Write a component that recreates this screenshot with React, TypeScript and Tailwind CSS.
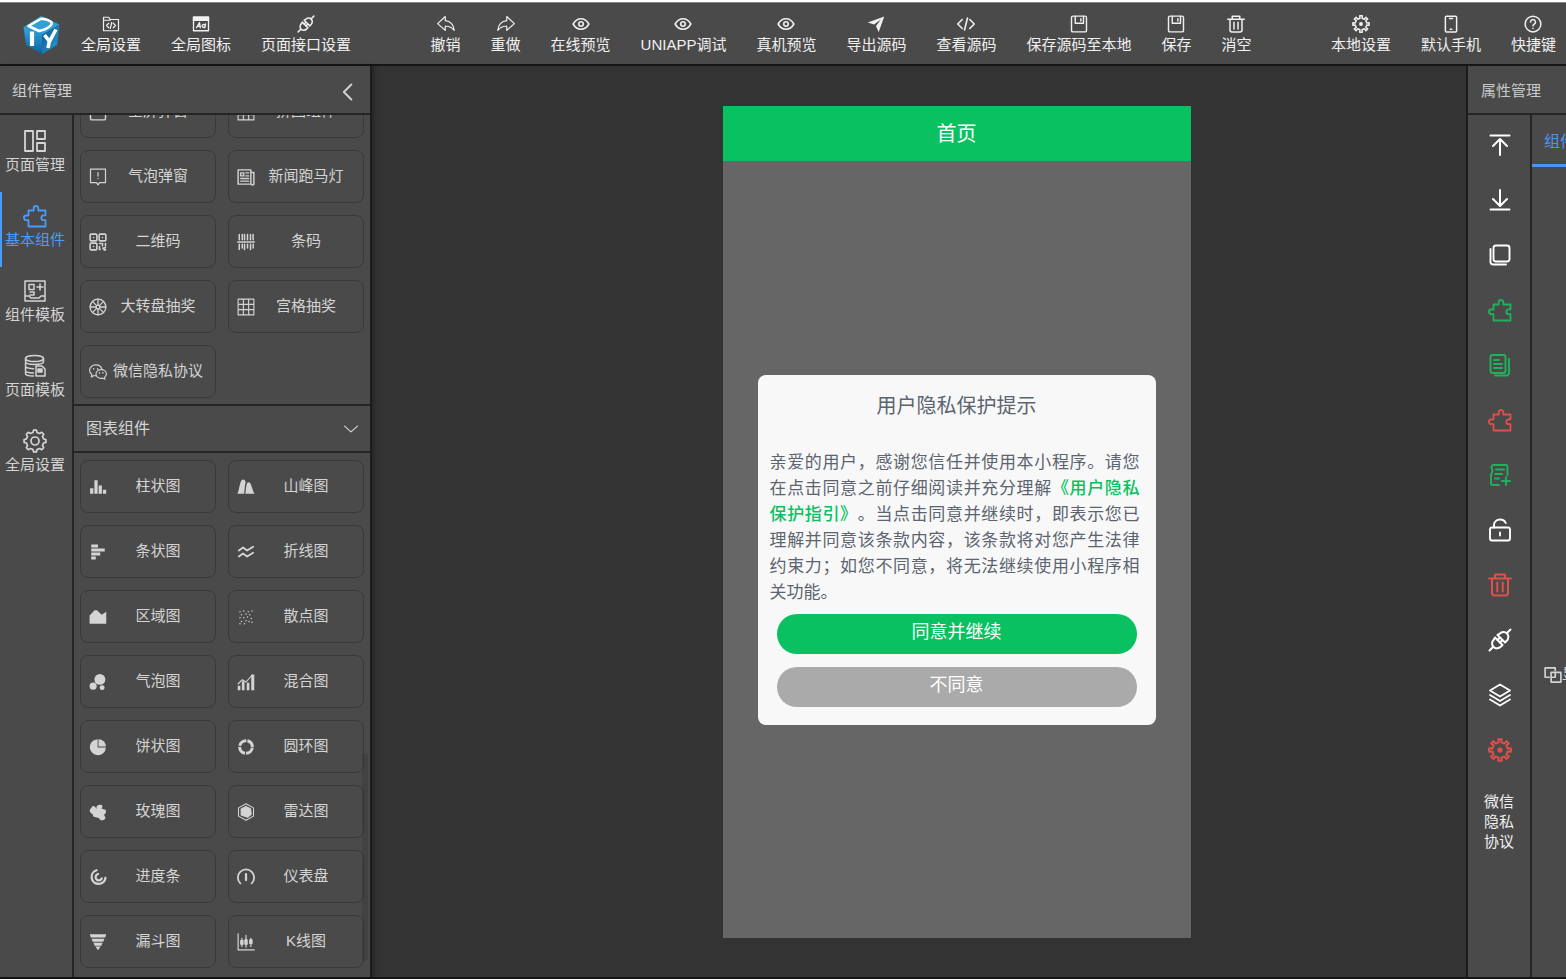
import React from "react";
import { clsx } from "clsx";

type IconProps = { className?: string };

const Svg = ({
  children,
  className,
  width = 1.8,
}: {
  children: React.ReactNode;
  className?: string;
  width?: number;
}) => (
  <svg
    viewBox="0 0 24 24"
    fill="none"
    stroke="currentColor"
    strokeWidth={width}
    strokeLinecap="round"
    strokeLinejoin="round"
    aria-hidden="true"
    className={clsx("shrink-0", className)}
  >
    {children}
  </svg>
);

const Fill = ({ children, className }: { children: React.ReactNode; className?: string }) => (
  <svg viewBox="0 0 24 24" fill="currentColor" aria-hidden="true" className={clsx("shrink-0", className)}>
    {children}
  </svg>
);

const FolderCode = ({ className }: IconProps) => (
  <Svg className={className} width={1.6}>
    <path d="M2 3h7l2 3h11v15H2zM2 7h9" />
    <path d="M9 11l-3 3 3 3M15 11l3 3-3 3M13 10l-2 8" />
  </Svg>
);

const FontWindow = ({ className }: IconProps) => (
  <Svg className={className}>
    <path d="M2 3h20v18H2z" />
    <path d="M2 3h20v4H2z" fill="currentColor" />
    <path d="M6 17l4-7 1 7M7.500 15h3.500" />
    <path d="M18 12l-1 5M17.500 14a2 2 0 1 0-.6 2" />
  </Svg>
);

const Plug = ({ className }: IconProps) => (
  <Svg className={className} width={2}>
    <path d="M1.500 22.500l3.500-3.500M19 5l3.500-3.500" />
    <path d="M7 9.500l7.500 7.500-1.500 1.500c-2.200 2.200-5.400 2.600-7.500.5s-1.800-5.300.4-7.500z" />
    <path d="M9.500 7l7.500 7.500 1.500-1.500c2.200-2.200 2.600-5.400.5-7.500s-5.300-1.800-7.500.4z" />
    <path d="M9.500 12l2-2M12 14.500l2-2" />
  </Svg>
);

const Undo = ({ className }: IconProps) => (
  <Svg className={className} width={1.6}>
    <path d="M11 2L.8 11.500 11 20.500v-5.500c5-.3 8.500 1 12 5.500C22.500 13.500 18 8 11 7.500z" />
  </Svg>
);

const Redo = ({ className }: IconProps) => (
  <Svg className={className} width={1.6}>
    <path d="M13 2l10.200 9.500L13 20.500v-5.500C8 14.700 4.500 16 1 20.500 1.500 13.500 6 8 13 7.500z" />
  </Svg>
);

const Eye = ({ className }: IconProps) => (
  <Svg className={className} width={2.1}>
    <path d="M1.500 12C4 7.500 7.600 5 12 5s8 2.500 10.500 7c-2.500 4.500-6.100 7-10.500 7S4 16.500 1.500 12z" />
    <circle cx="12" cy="12" r="3" />
  </Svg>
);

const Send = ({ className }: IconProps) => (
  <Fill className={className}>
    <path d="M23 2L1 10l8.500 2.500L18.500 6 12 14.500 15.500 23z" />
  </Fill>
);

const Code = ({ className }: IconProps) => (
  <Svg className={className} width={2.1}>
    <path d="M7 6l-6 6 6 6M17 6l6 6-6 6M14 4l-4 16" />
  </Svg>
);

const Save = ({ className }: IconProps) => (
  <Svg className={className} width={1.9}>
    <rect x="2" y="1.500" width="20" height="21" rx="2" />
    <path d="M7 2v9h11V2M14.500 5v3" />
  </Svg>
);

const Trash = ({ className }: IconProps) => (
  <Svg className={className} width={2}>
    <path d="M1 5.500h22M7 5.500V1.500h10v4M4 5.500V20a2.500 2.500 0 0 0 2.500 2.500h11A2.500 2.500 0 0 0 20 20V5.500" />
    <path d="M9.300 9.500v9M14.700 9.500v9" />
  </Svg>
);

// closed outline of a cog centred in the 24px box
function cog(teeth: number, outer: number, inner: number, tip: number, root: number) {
  const step = (Math.PI * 2) / teeth;
  const points: string[] = [];
  for (let i = 0; i < teeth; i++) {
    const a = i * step - Math.PI / 2;
    [
      [inner, a - step * root],
      [outer, a - step * tip],
      [outer, a + step * tip],
      [inner, a + step * root],
    ].forEach(([r, t]) => points.push(`${(12 + r * Math.cos(t)).toFixed(2)} ${(12 + r * Math.sin(t)).toFixed(2)}`));
  }
  return `M${points.join("L")}Z`;
}

const Gear = ({ className }: IconProps) => (
  <Svg className={className} width={2}>
    <path d={cog(8, 11, 7.8, 0.2, 0.23)} />
    <circle cx="12" cy="12" r="1.600" fill="currentColor" />
  </Svg>
);

const GearRound = ({ className }: IconProps) => (
  <Svg className={className} width={1.7}>
    <path d={cog(8, 11, 8.8, 0.16, 0.3)} />
    <circle cx="12" cy="12" r="4" />
  </Svg>
);

const Phone = ({ className }: IconProps) => (
  <Svg className={className} width={2}>
    <rect x="4.500" y="1.500" width="15" height="21" rx="1.500" />
    <path d="M10 4.500h4M11 19h2" />
  </Svg>
);

const Help = ({ className }: IconProps) => (
  <Svg className={className} width={2}>
    <circle cx="12" cy="12" r="10.500" />
    <path d="M8.700 9.300a3.300 3.300 0 1 1 5 2.800c-1.200.7-1.700 1.200-1.700 2.400M12 17.500v.4" />
  </Svg>
);

const Pages = ({ className }: IconProps) => (
  <Svg className={className} width={1.8}>
    <path d="M2 2h8v20H2zM14 2h8v8h-8zM14 14h8v8h-8z" />
  </Svg>
);

const Puzzle = ({ className }: IconProps) => (
  <Svg className={className} width={1.8}>
    <path d="M5.500 6.500h5.200V4.300a2.300 2.300 0 1 1 4.600 0v2.200h7.200v4.800h-1.700a2.400 2.400 0 1 0 0 4.900h1.700v6.300h-17v-6.300H3.300a2.300 2.300 0 1 1 0-4.700h2.200z" />
  </Svg>
);

const ComponentTpl = ({ className }: IconProps) => (
  <Svg className={className} width={1.5}>
    <path d="M2 2h20v20H2zM6 5.500h5v5H6zM17 5v6M14 8h6M2 17h4l2 2h8l2-2h4M7 13h4v3H7" />
  </Svg>
);

const PageTpl = ({ className }: IconProps) => (
  <Svg className={className} width={1.5}>
    <ellipse cx="11.500" cy="4.500" rx="9" ry="3" />
    <path d="M2.500 4.500v3c0 2 4 3 9 3s9-1 9-3v-3M2.500 9v3c0 1.500 3 2.500 8 2.700M2.500 13.500v3c0 1.500 3 2.300 8 2.500M2.500 18v1.500c0 1.500 3 2.500 8 2.500" />
    <path d="M13 12h6l3 3v7h-9z" />
    <path d="M15 15h4v3h-4z" fill="currentColor" />
  </Svg>
);

const Bubble = ({ className }: IconProps) => (
  <Svg className={className} width={1.6}>
    <path d="M2 1.500h20v18h-8l-2 3-2-3H2zM12 6v5M12 14v.3" />
  </Svg>
);

const News = ({ className }: IconProps) => (
  <Svg className={className} width={1.9}>
    <path d="M1.500 2.500h17v19h-17zM18.500 6H22.500v14a1.500 1.500 0 0 1-3.500 1.500" />
    <path d="M5 6.500h4v4H5zM12 6.500h3.500M12 10.500h3.500M5 14h10.500M5 17.500h10.500" />
  </Svg>
);

const QrCode = ({ className }: IconProps) => (
  <Svg className={className} width={2.1}>
    <rect x="1.500" y="1.500" width="9" height="9" rx="1.500" />
    <rect x="13.500" y="1.500" width="9" height="9" rx="1.500" />
    <rect x="1.500" y="13.500" width="9" height="9" rx="1.500" />
    <path d="M6 6h.01M18 6h.01M6 18h.01M14 14h4v3M22 14v3M14 18v4h1M18.500 20.500l3.500-1M22 22.500h-2" />
  </Svg>
);

const Barcode = ({ className }: IconProps) => (
  <Svg className={className} width={2}>
    <path d="M1 12h22M3 2v7M7 2v7M10 2v7M14 2v7M18 2v7M21.500 2v7M3 15v7M7 15v5M10 15v7M14 15v5M18 15v7M21.500 15v5" />
  </Svg>
);

const Wheel = ({ className }: IconProps) => (
  <Svg className={className} width={1.7}>
    <circle cx="12" cy="12" r="10.500" />
    <circle cx="12" cy="12" r="2.500" />
    <path d="M12 1.500v8M12 14.500v8M1.500 12h8M14.500 12h8M4.500 4.500l5.700 5.700M13.800 13.800l5.700 5.700M19.500 4.500l-5.700 5.700M10.200 13.800l-5.700 5.700" />
  </Svg>
);

const Grid = ({ className }: IconProps) => (
  <Svg className={className} width={1.5}>
    <path d="M1.500 1.500h21v21h-21zM8.500 1.500v21M15.500 1.500v21M1.500 8.500h21M1.500 15.500h21" />
  </Svg>
);

const Wechat = ({ className }: IconProps) => (
  <Svg className={className} width={1.5}>
    <path d="M9 17c-.8 0-1.500-.1-2.300-.3L3 18.800l.8-3.400C1.800 14 .8 12 .8 9.800.8 5.800 4.500 2.500 9 2.500c4.300 0 7.500 2.600 8.200 6" />
    <path d="M16.200 8.800c3.900 0 7 2.500 7 5.900 0 1.800-1 3.400-2.500 4.500l.6 2.500-2.800-1.500c-.7.2-1.500.3-2.300.3-3.800 0-6.900-2.500-6.900-5.800s3.100-5.900 6.900-5.900z" />
    <path d="M6.200 7.700v.4M11.500 7.700v.4M14 13v.3M18.500 13v.3" strokeWidth="2" />
  </Svg>
);

const BarChart = ({ className }: IconProps) => (
  <Fill className={className}>
    <path d="M1.500 13.500h4.300V21H1.500zM7.200 3h4.300v18H7.200zM12.900 10h4.300v11h-4.300zM18.600 15.500h4.300V21h-4.300z" />
  </Fill>
);

const Peaks = ({ className }: IconProps) => (
  <Fill className={className}>
    <path d="M.5 21C3.500 16 3.500 2 8 2c1.800 0 3 1.500 3.600 3.500C10.500 8 10.300 15 9.500 21z" />
    <path d="M11 21c1.300-5 .6-15.500 4.500-15.500C19.500 5.500 20 16 23.500 21z" />
  </Fill>
);

const HBars = ({ className }: IconProps) => (
  <Fill className={className}>
    <path d="M3 2h9v4H3zM3 7.300h18v4H3zM3 12.600h12v4H3zM3 18h6v4H3z" />
  </Fill>
);

const Lines = ({ className }: IconProps) => (
  <Svg className={className} width={2.5}>
    <path d="M2.500 10l5.500-4 5.500 4 8-5M2.500 18l5.500-4 5.500 4 8-5" />
  </Svg>
);

const Area = ({ className }: IconProps) => (
  <Fill className={className}>
    <path d="M.8 21V10l6.700-7h3l6.500 6 6-4v16z" />
  </Fill>
);

const Scatter = ({ className }: IconProps) => (
  <Svg className={className} width={1.9}>
    <path d="M4 5h.01M9 4h.01M15 5h.01M20 4h.01M6 9h.01M12 8h.01M17 9h.01M4 13h.01M9 13h.01M14 12h.01M19 14h.01M6 18h.01M12 17h.01M16 18h.01M20 19h.01M10 21h.01M4 21h.01" />
  </Svg>
);

const Bubbles = ({ className }: IconProps) => (
  <Fill className={className}>
    <circle cx="14.500" cy="8.500" r="7.300" />
    <circle cx="5.500" cy="17.500" r="4.700" />
    <circle cx="17.500" cy="19.500" r="3.300" />
  </Fill>
);

const Mixed = ({ className }: IconProps) => (
  <Fill className={className}>
    <path d="M1 17h3.500v6H1zM6.500 11H10v12H6.500zM13 13h3.500v10H13zM19 2h4v21h-4z" />
    <path d="M1 15l6-6 5 3 8-9" fill="none" stroke="currentColor" strokeWidth="1.500" />
  </Fill>
);

const Pie = ({ className }: IconProps) => (
  <Fill className={className}>
    <path d="M11.500 1.500v11h11A10.700 10.700 0 1 1 11.500 1.500z" />
    <path d="M12.700 1.500a10 10 0 0 1 9.800 9.800h-9.800z" />
  </Fill>
);

const Donut = ({ className }: IconProps) => (
  <Svg className={className} width={1}>
    <circle
      cx="12"
      cy="12"
      r="8.500"
      strokeWidth="4"
      strokeLinecap="butt"
      strokeDasharray="11.850 1.500"
      strokeDashoffset="-1"
    />
  </Svg>
);

const Rose = ({ className }: IconProps) => (
  <Fill className={className}>
    <path d="M10 8V4.500C12 1.500 17 1.500 18 4l-1 3.500 5 1.500c1.500 2.500.5 5.500-2 6.500l2 4c-.5 3-4 4-6.500 3.500L13 20l-4-1c-2.500 0-4-1.500-4-4-2.500-1-4.500-3.500-4-6L5 4c2-.5 4 1.500 5 4z" />
  </Fill>
);

const Radar = ({ className }: IconProps) => (
  <Svg className={className} width={1.4}>
    <path d="M12 1l10 5.500v11L12 23 2 17.500v-11z" />
    <path d="M12 4.500l6 3 1 7.500-5 4-8.500-3V8z" fill="currentColor" />
  </Svg>
);

const Progress = ({ className }: IconProps) => (
  <Svg className={className} width={3}>
    <path d="M10 3a9.300 9.300 0 1 0 12 10" />
    <path d="M12 8a4.300 4.300 0 1 0 5 6" />
  </Svg>
);

const Gauge = ({ className }: IconProps) => (
  <Svg className={className} width={2.4}>
    <path d="M4.500 20.500a10.800 10.800 0 1 1 15 0" />
    <path d="M12 8v8" strokeWidth="3" />
  </Svg>
);

const Funnel = ({ className }: IconProps) => (
  <Fill className={className}>
    <path d="M1 1.500h22l-1.500 4.500H2.500zM3.500 7.500h17L19 11.500H5zM6 13h12l-1.500 4h-9zM8.500 18h7L12 23z" />
  </Fill>
);

const Candles = ({ className }: IconProps) => (
  <Svg className={className} width={1.6}>
    <path d="M1.500 1v21.500h21.500M6.500 7v11M12 3v16M18.500 7v11" />
    <path d="M5 10h3v5H5zM10.500 9h3v6h-3zM17 9h3v5h-3z" fill="currentColor" />
  </Svg>
);

const ToTop = ({ className }: IconProps) => (
  <Svg className={className} width={2}>
    <path d="M2.500 2.500h19M12 22V7M5 13l7-7 7 7" />
  </Svg>
);

const ToBottom = ({ className }: IconProps) => (
  <Svg className={className} width={2}>
    <path d="M2.500 21.500h19M12 2v15M5 11l7 7 7-7" />
  </Svg>
);

const Copy = ({ className }: IconProps) => (
  <Svg className={className} width={1.9}>
    <rect x="5.500" y="2.500" width="16" height="16" rx="2.500" />
    <path d="M2.500 6v13a2.500 2.500 0 0 0 2.500 2.500H18" />
  </Svg>
);

const CopyDoc = ({ className }: IconProps) => (
  <Svg className={className} width={1.9}>
    <rect x="2.500" y="2" width="15" height="18" rx="2" />
    <path d="M6 7h5M6 11h8M6 15h8M21 6v14a2.500 2.500 0 0 1-2.500 2.500H7" />
  </Svg>
);

const DocAdd = ({ className }: IconProps) => (
  <Svg className={className} width={1.9}>
    <path d="M19.500 12V4a2 2 0 0 0-2-2h-12a2 2 0 0 0-2 2c0 2 1 2 1 4s-1.500 2-1.500 4v8a2 2 0 0 0 2 2h6M8 6.500h8M7 11h7M7 15.500h4M18 14v8M14 18h8" />
  </Svg>
);

const Unlock = ({ className }: IconProps) => (
  <Svg className={className} width={1.9}>
    <rect x="2" y="9.500" width="20" height="13" rx="2" />
    <path d="M6 9.500V7c0-3 2.500-5.500 6-5.500 2.700 0 4.800 1.300 5.700 3.500M12 14.500v3" />
  </Svg>
);

const Layers = ({ className }: IconProps) => (
  <Svg className={className} width={1.8}>
    <path d="M12 1.500l10 6-10 6-10-6zM2 12l10 6 10-6M2 16.500l10 6 10-6" />
  </Svg>
);

const Linked = ({ className }: IconProps) => (
  <Svg className={className} width={2.2}>
    <path d="M7 15H1.500V2.500H15V6M9.500 8.500H22.500V21.500H9.500zM15 8.500V15H11" />
  </Svg>
);

const Logo = () => (
  <svg viewBox="0 0 38 40" className="h-10 w-[38px] shrink-0" role="img" aria-label="DIY">
    <defs>
      <linearGradient id="face-l" x1="0" y1="0" x2="0" y2="1">
        <stop offset="0" stopColor="#2fa9e0" />
        <stop offset="1" stopColor="#0d5f9c" />
      </linearGradient>
      <linearGradient id="face-r" x1="0" y1="0" x2="1" y2="1">
        <stop offset="0" stopColor="#0b4f8c" />
        <stop offset="1" stopColor="#2ba6dc" />
      </linearGradient>
    </defs>
    <path d="M19 1l18.500 8.500L20 20 1.500 12z" fill="#2f9fd6" />
    <path d="M1.500 12L20 20v19L4 30z" fill="url(#face-l)" />
    <path d="M37.500 9.500L20 20v19l15-9z" fill="url(#face-r)" />
    <path
      d="M6.500 11L18.500 4c4-.6 9.500 1.200 11 3.300 1 2-2.500 5-7 7.300L17 16z"
      fill="none"
      stroke="#fff"
      strokeWidth="2.600"
      strokeLinejoin="round"
    />
    <path d="M10 16.500V31" stroke="#fff" strokeWidth="4.200" />
    <path d="M22.500 20l5 6.500 6.500-12M27.500 25.500l-1.500 7.500" fill="none" stroke="#fff" strokeWidth="3.600" />
  </svg>
);

type Item = { label: string; icon: React.FC<IconProps> };

const pageTools: Item[] = [
  { label: "全局设置", icon: FolderCode },
  { label: "全局图标", icon: FontWindow },
  { label: "页面接口设置", icon: Plug },
];

const editTools: Item[] = [
  { label: "撤销", icon: Undo },
  { label: "重做", icon: Redo },
  { label: "在线预览", icon: Eye },
  { label: "UNIAPP调试", icon: Eye },
  { label: "真机预览", icon: Eye },
  { label: "导出源码", icon: Send },
  { label: "查看源码", icon: Code },
  { label: "保存源码至本地", icon: Save },
  { label: "保存", icon: Save },
  { label: "消空", icon: Trash },
];

const localTools: Item[] = [
  { label: "本地设置", icon: Gear },
  { label: "默认手机", icon: Phone },
  { label: "快捷键", icon: Help },
];

const sideTabs: Item[] = [
  { label: "页面管理", icon: Pages },
  { label: "基本组件", icon: Puzzle },
  { label: "组件模板", icon: ComponentTpl },
  { label: "页面模板", icon: PageTpl },
  { label: "全局设置", icon: GearRound },
];

const baseWidgets: Item[] = [
  { label: "全屏弹窗", icon: Save },
  { label: "拼图组件", icon: Grid },
  { label: "气泡弹窗", icon: Bubble },
  { label: "新闻跑马灯", icon: News },
  { label: "二维码", icon: QrCode },
  { label: "条码", icon: Barcode },
  { label: "大转盘抽奖", icon: Wheel },
  { label: "宫格抽奖", icon: Grid },
  { label: "微信隐私协议", icon: Wechat },
];

const chartWidgets: Item[] = [
  { label: "柱状图", icon: BarChart },
  { label: "山峰图", icon: Peaks },
  { label: "条状图", icon: HBars },
  { label: "折线图", icon: Lines },
  { label: "区域图", icon: Area },
  { label: "散点图", icon: Scatter },
  { label: "气泡图", icon: Bubbles },
  { label: "混合图", icon: Mixed },
  { label: "饼状图", icon: Pie },
  { label: "圆环图", icon: Donut },
  { label: "玫瑰图", icon: Rose },
  { label: "雷达图", icon: Radar },
  { label: "进度条", icon: Progress },
  { label: "仪表盘", icon: Gauge },
  { label: "漏斗图", icon: Funnel },
  { label: "K线图", icon: Candles },
];

const actions = [
  { name: "置顶", icon: ToTop, color: "text-white" },
  { name: "置底", icon: ToBottom, color: "text-white" },
  { name: "复制", icon: Copy, color: "text-white" },
  { name: "添加组件", icon: Puzzle, color: "text-[#1fb25d]" },
  { name: "复制页面", icon: CopyDoc, color: "text-[#1fb25d]" },
  { name: "移除组件", icon: Puzzle, color: "text-[#e0504a]" },
  { name: "新增模板", icon: DocAdd, color: "text-[#1fb25d]" },
  { name: "解锁", icon: Unlock, color: "text-white" },
  { name: "删除", icon: Trash, color: "text-[#e0504a]" },
  { name: "接口", icon: Plug, color: "text-white" },
  { name: "图层", icon: Layers, color: "text-white" },
  { name: "设置", icon: Gear, color: "text-[#e0504a]" },
];

function ToolGroup({ items }: { items: Item[] }) {
  return (
    <div className="flex shrink-0 gap-[30px]">
      {items.map(({ label, icon: Icon }) => (
        <button key={label} type="button" className="flex flex-col items-center gap-0.5 text-[#f0f0f0]">
          <Icon className="size-[18px]" />
          <span className="text-[15px] leading-5 whitespace-nowrap">{label}</span>
        </button>
      ))}
    </div>
  );
}

function WidgetGrid({ items, className }: { items: Item[]; className?: string }) {
  return (
    <div className={clsx("grid shrink-0 grid-cols-2 gap-3 px-1.5", className)}>
      {items.map(({ label, icon: Icon }) => (
        <button
          key={label}
          type="button"
          className="flex h-[53px] items-center rounded-lg border border-[#3a3a3a] pr-1.5 pl-2 text-[#d4d4d4]"
        >
          <Icon className="size-[18px]" />
          <span className="flex-1 text-center text-[15px] whitespace-nowrap">{label}</span>
        </button>
      ))}
    </div>
  );
}

function ComponentPanel() {
  return (
    <aside className="z-10 flex w-[372px] shrink-0 flex-col border-r-2 border-[#1c1c1c] bg-[#4a4a4a] shadow-[2px_0_4px_rgba(0,0,0,0.3)]">
      <div className="flex h-[49px] shrink-0 items-center justify-between border-b-2 border-[#252525] px-3 pt-1 text-[#d0d0d0]">
        <h2 className="text-[15px]">组件管理</h2>
        <button type="button" aria-label="收起">
          <Svg className="size-5" width={2.4}>
            <path d="M16 3l-9 9 9 9" />
          </Svg>
        </button>
      </div>
      <div className="flex min-h-0 flex-1">
        <nav className="flex w-[74px] shrink-0 flex-col border-r-2 border-[#252525] pt-0.5">
          {sideTabs.map(({ label, icon: Icon }, i) => (
            <button
              key={label}
              type="button"
              className={clsx(
                "flex h-[75px] flex-col items-center justify-center border-l-2 pr-1 pb-1",
                i === 1 ? "border-[#4a9bff] text-[#4a9bff]" : "border-transparent text-[#d4d4d4]"
              )}
            >
              <Icon className="size-6" />
              <span className="text-[15px] leading-6 whitespace-nowrap">{label}</span>
            </button>
          ))}
        </nav>
        <div className="relative flex min-w-0 flex-1 flex-col justify-end overflow-hidden">
          <WidgetGrid items={baseWidgets} className="pb-1.5" />
          <button
            type="button"
            className="flex h-[49px] shrink-0 items-center justify-between border-y-2 border-[#252525] px-3 text-[#d4d4d4]"
          >
            <span className="text-base">图表组件</span>
            <Svg className="size-3.5" width={2}>
              <path d="M1 7l11 10L23 7" />
            </Svg>
          </button>
          <WidgetGrid items={chartWidgets} className="pt-[7px] pb-[9px]" />
          <div className="absolute right-0.5 bottom-4 h-52 w-1.5 rounded-full bg-black/10" />
        </div>
      </div>
    </aside>
  );
}

function PhonePreview() {
  return (
    <div className="flex h-[832px] w-[468px] flex-col bg-[#666]">
      <div className="flex h-[55px] shrink-0 items-center justify-center bg-[#09c160] text-xl text-white">首页</div>
      <div className="flex flex-1 items-center px-[35px]">
        <div className="flex w-full flex-col rounded-lg bg-[#f8f8f8] pt-4 pb-[18px] text-[#5c6470]">
          <h3 className="text-center text-xl leading-[30px]">用户隐私保护提示</h3>
          <p className="mt-[29px] pr-4 pl-3 text-justify text-[17px] leading-[26px] [text-spacing-trim:space-all]">
            亲爱的用户，感谢您信任并使用本小程序。请您在点击同意之前仔细阅读并充分理解
            <a href="#guide" className="font-medium text-[#09c160]">
              《用户隐私保护指引》
            </a>
            。当点击同意并继续时，即表示您已理解并同意该条款内容，该条款将对您产生法律约束力；如您不同意，将无法继续使用小程序相关功能。
          </p>
          <div className="mt-2 flex flex-col gap-[13px] px-[19px] text-lg text-white">
            <button type="button" className="h-10 rounded-full bg-[#09c160] pb-1">
              同意并继续
            </button>
            <button type="button" className="h-10 rounded-full bg-[#aaa] pb-1">
              不同意
            </button>
          </div>
        </div>
      </div>
    </div>
  );
}

function PropertyPanel() {
  return (
    <aside className="flex w-[100px] shrink-0 flex-col overflow-hidden border-l-2 border-[#1c1c1c] bg-[#4a4a4a]">
      <div className="flex h-[49px] shrink-0 items-center border-b-2 border-[#252525] pt-1 pl-[13px]">
        <h2 className="text-[15px] whitespace-nowrap text-[#c8c8c8]">属性管理</h2>
      </div>
      <div className="flex min-h-0 flex-1">
        <div className="flex w-16 shrink-0 flex-col items-center border-r-2 border-[#252525]">
          {actions.map(({ name, icon: Icon, color }) => (
            <button
              key={name}
              type="button"
              aria-label={name}
              className={clsx("flex h-[55px] w-full items-center justify-center pt-1 pl-0.5", color)}
            >
              <Icon className="size-6" />
            </button>
          ))}
          <p className="mt-[17px] w-[30px] text-[15px] leading-5 text-[#f0f0f0]">微信隐私协议</p>
        </div>
        <div className="flex min-w-0 flex-1 flex-col overflow-hidden">
          <button
            type="button"
            className="h-[52px] w-24 shrink-0 border-b-[3px] border-[#4a96f5] pt-1 pl-3 text-left text-base whitespace-nowrap text-[#4a96f5]"
          >
            组件
          </button>
          <div className="flex flex-1 items-center pt-[205px] pl-3 text-[15px] whitespace-nowrap text-[#d4d4d4]">
            <Linked className="size-[18px]" />
            显示
          </div>
        </div>
      </div>
    </aside>
  );
}

export default function App() {
  return (
    <div className="flex h-screen flex-col overflow-hidden border-t-2 border-white bg-[#333] font-['Liberation_Sans','Noto_Sans_CJK_SC',sans-serif]">
      <header className="flex h-16 shrink-0 items-center justify-between border-t border-b-2 border-t-[#888] border-b-[#161616] bg-[#4a4a4a] pt-0.5 pr-2.5 pl-[22px]">
        <div className="flex items-center gap-[21px]">
          <Logo />
          <ToolGroup items={pageTools} />
        </div>
        <ToolGroup items={editTools} />
        <ToolGroup items={localTools} />
      </header>
      <div className="flex min-h-0 flex-1 border-b-2 border-[#161616]">
        <ComponentPanel />
        <main className="flex min-w-0 flex-1 justify-center pt-10 pl-[75px]">
          <PhonePreview />
        </main>
        <PropertyPanel />
      </div>
    </div>
  );
}
